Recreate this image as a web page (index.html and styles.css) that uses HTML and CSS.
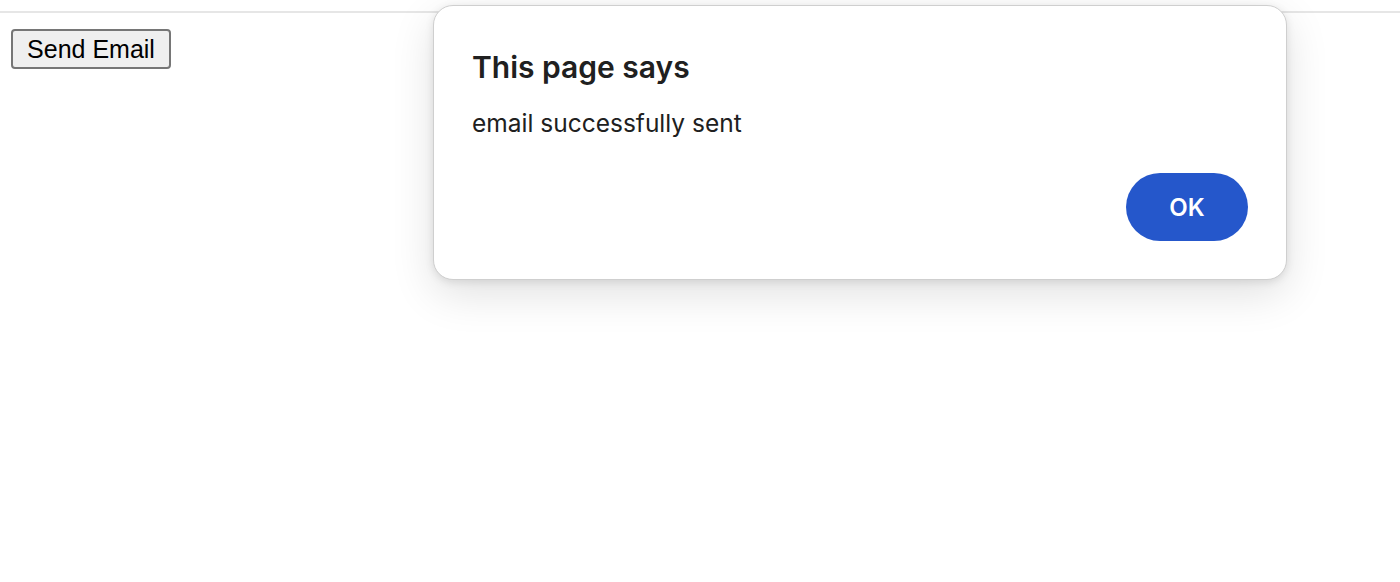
FILE: index.html
```html
<!DOCTYPE html>
<html>
<head>
<meta charset="utf-8">
<link rel="stylesheet" href="styles.css">
</head>
<body>
<div class="topbar"></div>
<main class="page">
  <button class="send-btn">Send Email</button>
</main>
<div class="dialog">
  <h1 class="dialog-title">This page says</h1>
  <p class="dialog-msg">email successfully sent</p>
  <div class="dialog-actions">
    <button class="ok-btn">OK</button>
  </div>
</div>
</body>
</html>
```

FILE: styles.css
```css
html, body {
  margin: 0;
  padding: 0;
  background: #ffffff;
  width: 1400px;
  height: 582px;
  overflow: hidden;
}
.topbar {
  height: 11px;
  border-bottom: 2px solid #e6e6e6;
}
.page {
  padding: 16px 11px;
}
.send-btn {
  font-family: "Liberation Sans", Arial, sans-serif;
  font-size: 25px;
  color: #000;
  background: #efefef;
  border: 2px solid #767676;
  border-radius: 4px;
  height: 40px;
  width: 160px;
  padding: 0;
  line-height: 1;
}
.dialog {
  position: absolute;
  left: 433px;
  top: 5px;
  width: 852px;
  height: 273px;
  box-sizing: content-box;
  background: #fff;
  border: 1px solid #cfcfcf;
  border-radius: 20px;
  box-shadow: 0 14px 44px rgba(0,0,0,0.12), 0 2px 8px rgba(0,0,0,0.10);
  display: flex;
  flex-direction: column;
  font-family: Inter, "Noto Sans", sans-serif;
  color: #202020;
}
.dialog-title {
  margin: 43px 0 0 38px;
  font-size: 30px;
  font-weight: 600;
  line-height: 36px;
}
.dialog-msg {
  margin: 23px 0 0 38px;
  font-size: 24.5px;
  line-height: 30px;
}
.dialog-actions {
  display: flex;
  justify-content: flex-end;
  padding: 35px 38px 0 0;
}
.ok-btn {
  width: 122px;
  height: 68px;
  border: none;
  border-radius: 34px;
  background: #2557cb;
  color: #fff;
  font-family: Inter, "Noto Sans", sans-serif;
  font-size: 24px;
  font-weight: 600;
}
```
